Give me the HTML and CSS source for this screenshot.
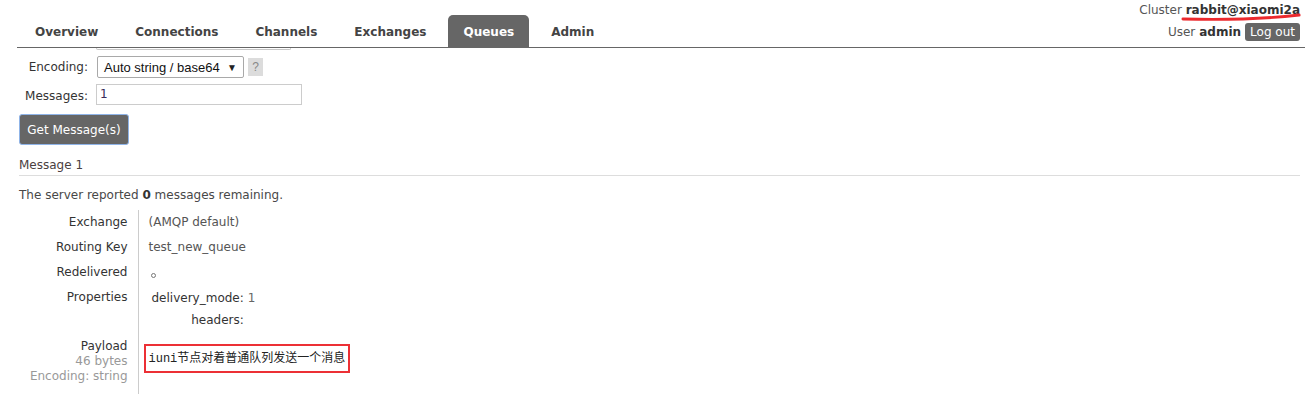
FILE: index.html
```html
<!DOCTYPE html>
<html>
<head>
<meta charset="utf-8">
<title>RabbitMQ Management</title>
<link rel="stylesheet" href="styles.css">
</head>
<body>
<header class="top">
  <nav class="menu">
    <ul>
      <li><a href="#">Overview</a></li>
      <li><a href="#">Connections</a></li>
      <li><a href="#">Channels</a></li>
      <li><a href="#">Exchanges</a></li>
      <li><a href="#" class="selected">Queues</a></li>
      <li><a href="#">Admin</a></li>
    </ul>
  </nav>
  <div class="status">
    <div class="cluster">Cluster <b>rabbit@xiaomi2a</b></div>
    <div class="user">User <b>admin</b> <button class="logout">Log out</button></div>
  </div>
  <svg class="scribble" width="126" height="10" viewBox="0 0 126 10"><path d="M2 7 C40 8, 90 6.5, 122 3" fill="none" stroke="#ec2a2e" stroke-width="3" stroke-linecap="round"/></svg>
</header>

<main class="content">
  <div class="cut-select"></div>
  <div class="form">
    <label class="lbl">Encoding:</label>
    <div class="field">
      <div class="select"><span>Auto string / base64</span><span class="arrow">▼</span></div>
      <span class="help">?</span>
    </div>
    <label class="lbl lbl-low">Messages:</label>
    <div class="field"><div class="input">1</div></div>
  </div>
  <button class="get">Get Message(s)</button>

  <h3 class="msg-title">Message 1</h3>
  <p class="remaining">The server reported <b>0</b> messages remaining.</p>

  <table class="facts">
    <tr><th>Exchange</th><td>(AMQP default)</td></tr>
    <tr><th>Routing Key</th><td>test_new_queue</td></tr>
    <tr><th>Redelivered</th><td><span class="circle"></span></td></tr>
    <tr><th>Properties</th><td>
      <table class="mini">
        <tr><th>delivery_mode:</th><td>1</td></tr>
        <tr><th>headers:</th><td></td></tr>
      </table>
    </td></tr>
    <tr class="last"><th>Payload<br><span class="sub">46 bytes</span><br><span class="sub">Encoding: string</span></th>
      <td><div class="payload">iuni节点对着普通队列发送一个消息</div></td></tr>
  </table>
</main>
</body>
</html>
```

FILE: styles.css
```css
* { box-sizing: border-box; }
html, body { margin: 0; padding: 0; background: #fff; }
body {
  font-family: "DejaVu Sans", Verdana, sans-serif;
  font-size: 12px;
  line-height: 15px;
  color: #484848;
  width: 1305px;
  height: 410px;
  overflow: hidden;
}

.top {
  position: relative;
  display: flex;
  justify-content: space-between;
  align-items: flex-start;
  height: 48px;
  margin-left: 17px;
  padding-right: 5px;
  border-bottom: 1px solid #666;
}
.menu ul {
  list-style: none;
  display: flex;
  gap: 7px;
  margin: 15px 0 0 3px;
  padding: 0;
}
.menu a {
  display: block;
  height: 32px;
  line-height: 34px;
  padding: 0 15px;
  font-weight: bold;
  color: #444;
  text-decoration: none;
  border-radius: 5px 5px 0 0;
}
.menu a.selected { background: #666; color: #fff; }

.status {
  display: flex;
  flex-direction: column;
  align-items: flex-end;
  color: #555;
}
.cluster { margin-top: 2px; line-height: 16px; }
.cluster b, .user b { color: #333; }
.user { margin-top: 5px; display: flex; align-items: center; gap: 4px; }
.logout {
  height: 18px;
  padding: 0 5px;
  border: 0;
  border-radius: 3px;
  background: #666;
  color: #fff;
  font-family: "DejaVu Sans", Verdana, sans-serif;
  font-size: 12px;
  line-height: 18px;
}
.scribble { position: absolute; right: 2px; top: 12px; width: 122px; }

.content { padding: 0 5px 0 19px; }
.cut-select {
  margin-left: 77px;
  width: 195px;
  height: 2px;
  border: 1px solid #c8c8c8;
  border-top: 0;
  border-radius: 0 0 2px 2px;
}
.form {
  display: grid;
  grid-template-columns: 69px auto;
  column-gap: 8px;
  row-gap: 6px;
  margin-top: 6px;
  align-items: center;
}
.lbl { text-align: right; color: #333; }
.lbl-low { padding-top: 4px; }
.field { display: flex; align-items: center; }
.select {
  width: 147px;
  height: 22px;
  margin-left: 1px;
  border: 1px solid #a9a9a9;
  border-radius: 2px;
  padding: 0 6px 0 6px;
  display: flex;
  justify-content: space-between;
  align-items: center;
  font-family: "Liberation Sans", Arial, sans-serif;
  font-size: 13px;
  color: #111;
}
.arrow { font-size: 10px; color: #222; }
.help {
  margin-left: 4px;
  width: 15px;
  height: 18px;
  background: #dcdcdc;
  color: #888;
  text-align: center;
  line-height: 18px;
  font-family: "Liberation Sans", Arial, sans-serif;
  font-size: 12px;
}
.input {
  width: 206px;
  height: 21px;
  border: 1px solid #ccc;
  padding: 2px 3px;
  color: #3b2b5b;
}
.get {
  display: block;
  margin-top: 9px;
  width: 110px;
  height: 31px;
  background: #666;
  color: #fff;
  border: 1px solid #8fb4e8;
  border-radius: 3px;
  font-family: "DejaVu Sans", Verdana, sans-serif;
  font-size: 12px;
  padding: 0;
}
.msg-title {
  margin: 13px 0 0;
  padding-bottom: 2px;
  font-size: 12px;
  font-weight: normal;
  line-height: 15px;
  color: #4a4040;
  border-bottom: 1px solid #ddd;
}
.remaining { margin: 12px 0 0; }
.remaining b { color: #333; }

.facts { border-collapse: collapse; margin-top: 7px; }
.facts > tbody > tr > th {
  width: 119px;
  text-align: right;
  font-weight: normal;
  color: #333;
  vertical-align: top;
  padding: 5px 10px 5px 0;
  border-right: 1px solid #ccc;
  white-space: nowrap;
}
.facts > tbody > tr > td {
  vertical-align: top;
  padding: 5px 0 5px 10px;
  color: #555;
}
.facts > tbody > tr.last > th { padding-bottom: 10px; }
.sub { color: #999; }
.circle {
  display: inline-block;
  width: 5px;
  height: 5px;
  margin: 8px 0 0 2px;
  border: 1px solid #777;
  border-radius: 50%;
  vertical-align: top;
}
.mini { border-collapse: collapse; }
.mini th {
  text-align: right;
  font-weight: normal;
  color: #333;
  padding: 1px 4px 6px 3px;
}
.mini td { padding: 1px 0 6px 0; color: #666; }
.mini tr:last-child th, .mini tr:last-child td { padding-bottom: 1px; }
.payload {
  display: inline-block;
  margin: 5px 0 0 -5px;
  border: 2px solid #ec3035;
  padding: 6px 3px 4px 3px;
  font-family: "Liberation Mono", "Noto Sans CJK SC", monospace;
  font-size: 12px;
  line-height: 15px;
  color: #222;
}
```
